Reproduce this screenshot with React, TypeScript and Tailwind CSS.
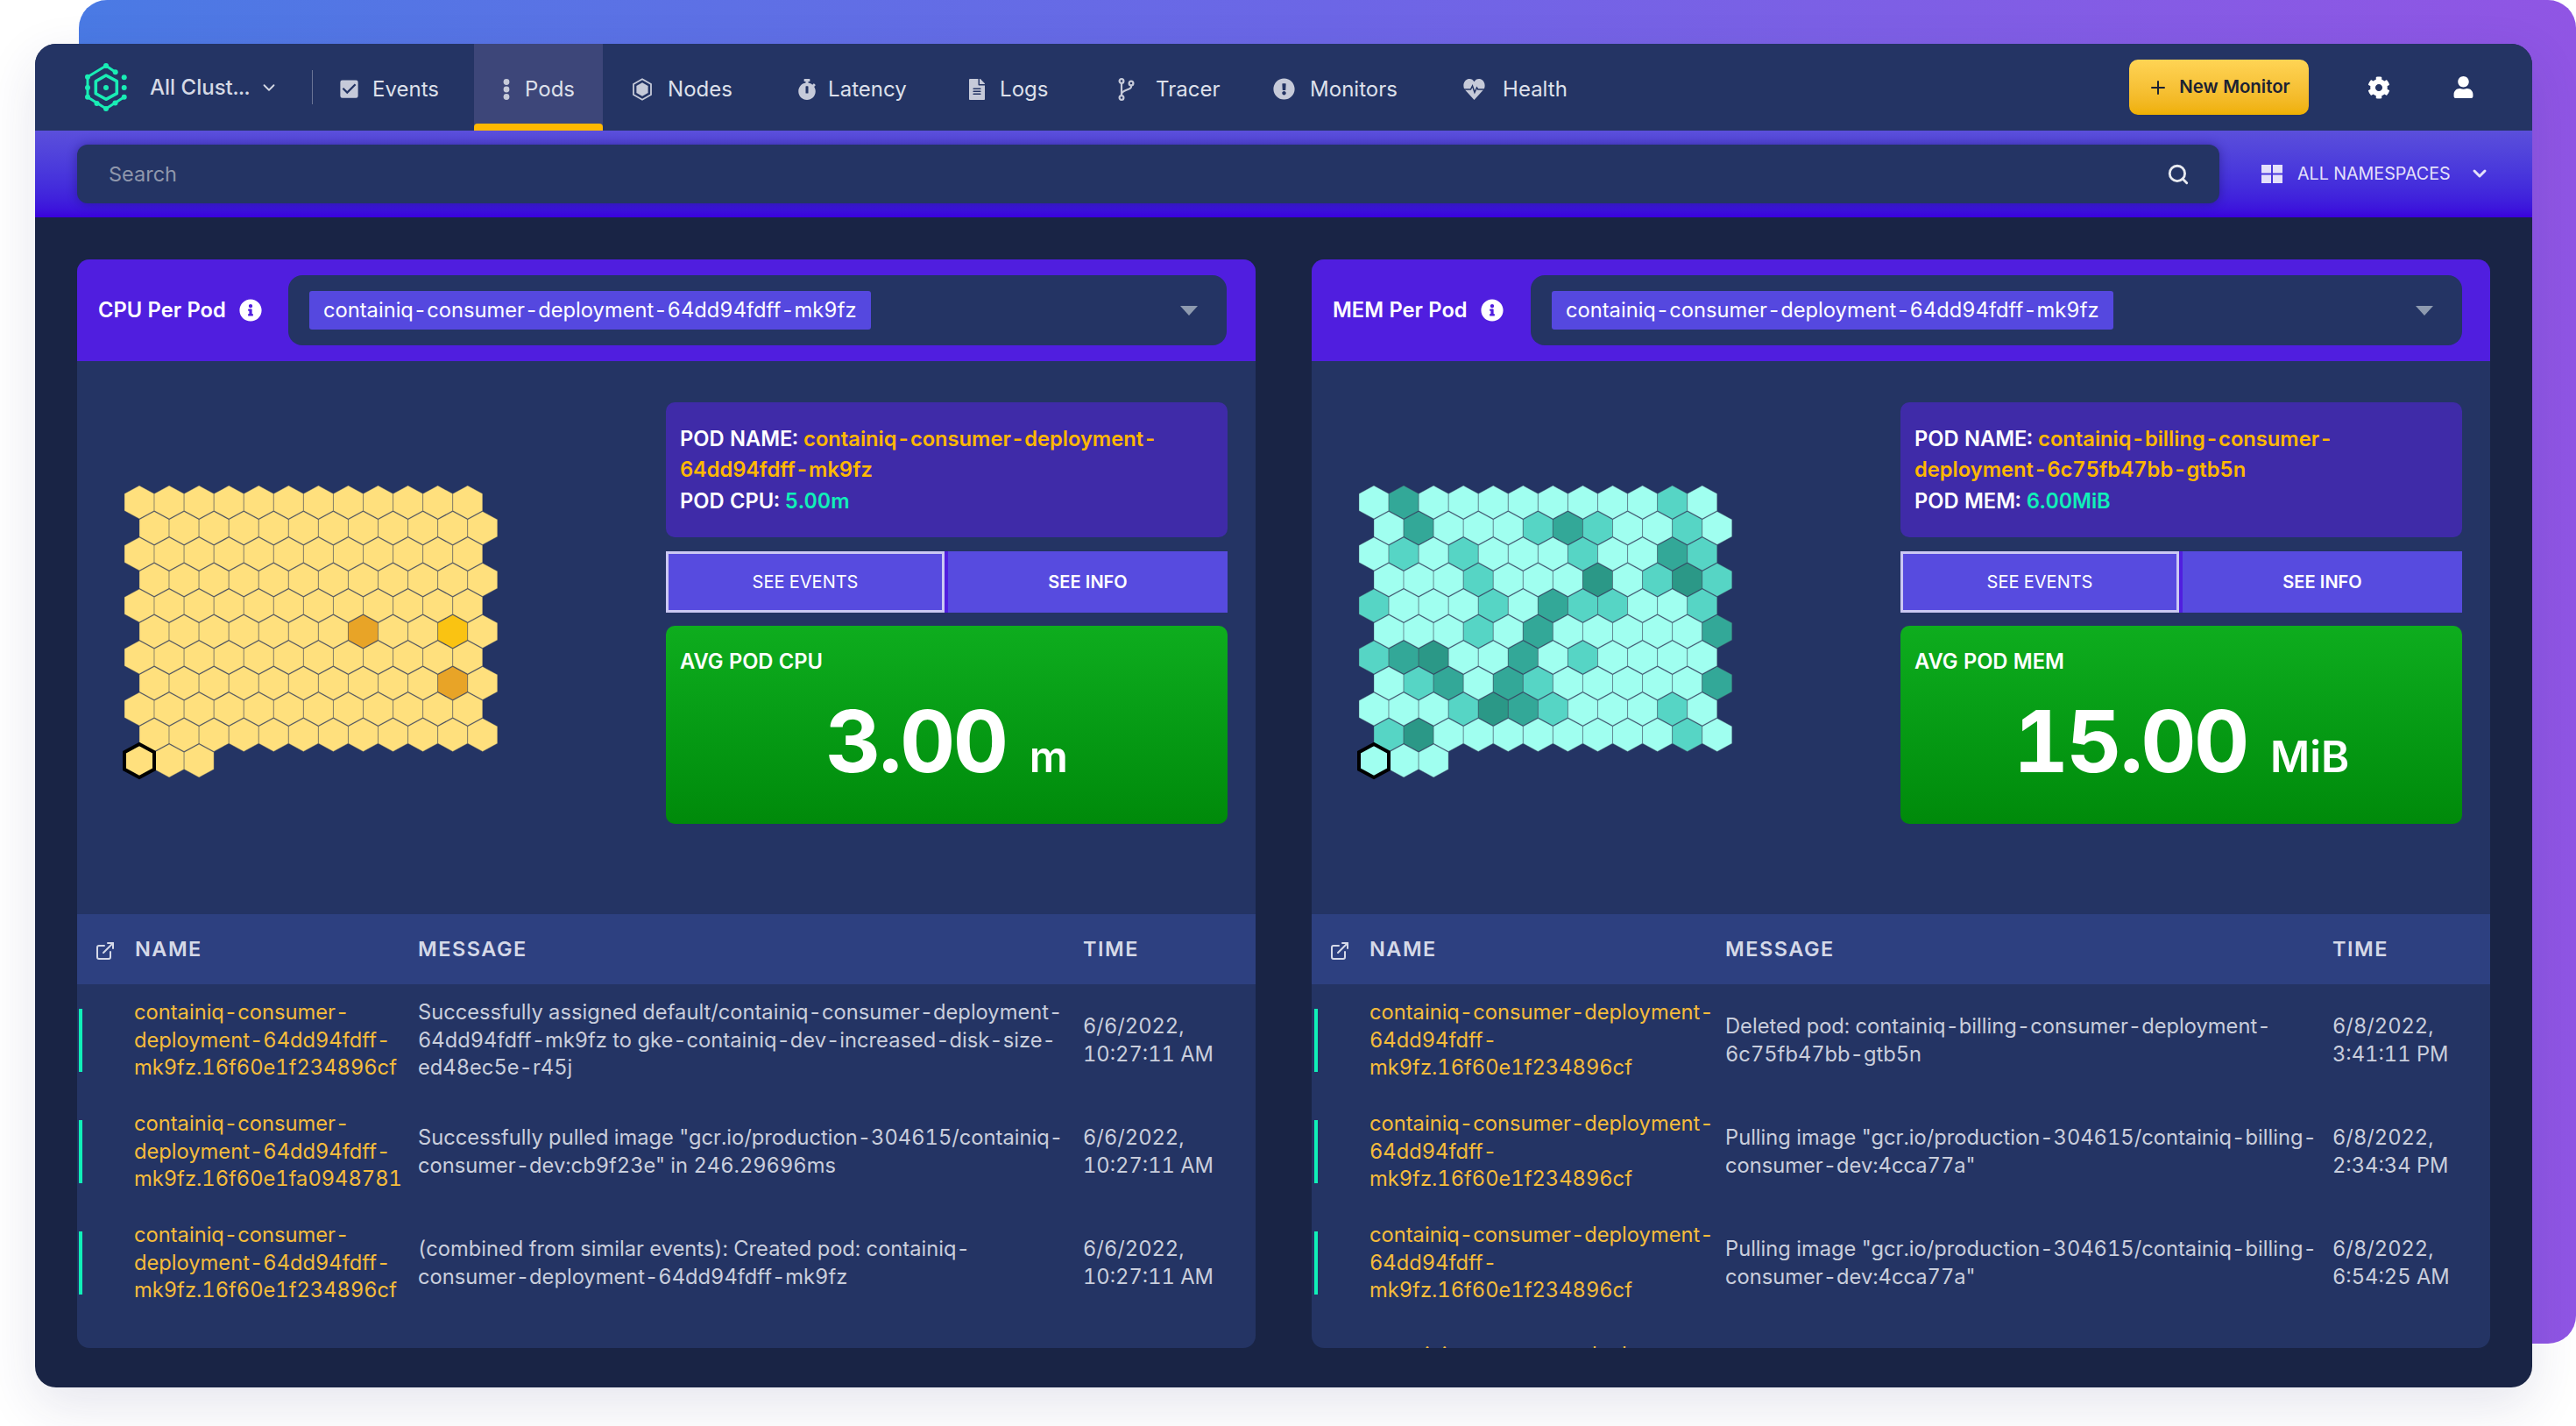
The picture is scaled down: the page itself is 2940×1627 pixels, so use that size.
import React from "react";
import { FaCog, FaExclamationCircle, FaFileAlt, FaInfoCircle, FaStopwatch, FaUser } from "react-icons/fa";
import { FiChevronDown, FiExternalLink, FiPlus, FiSearch } from "react-icons/fi";
import { MdCheckBox } from "react-icons/md";

function Logo() {
  const c = "#19EDB5";
  const dots: [number, number][] = [
    [31, 15], [41.7, 22.3], [10, 27.7], [10, 40], [10, 50.7], [20.5, 58], [31, 64], [41.5, 57.5], [51.7, 50.7], [51.7, 28.3], [51.7, 40], [31, 40],
  ];
  return (
    <svg width="50" height="56" viewBox="6 12 50 56" fill="none" className="shrink-0">
      <path d="M41.7 22.3 L31 15 L10 27.7 V50.7 L31 64 L51.7 50.7" stroke={c} strokeWidth="3" strokeLinejoin="round" />
      <path d="M31 26 L43.3 32.7 V46.7 L31 53.3 L19.3 46.7 V32.7 Z" stroke={c} strokeWidth="3.6" strokeLinejoin="round" />
      {dots.map(([x, y], i) => (
        <circle key={i} cx={x} cy={y} r="3" fill={c} />
      ))}
    </svg>
  );
}

function DotsIcon() {
  return (
    <svg width="12" height="26" viewBox="0 0 12 26" fill="#C6CAD9">
      <circle cx="6" cy="4.5" r="3.4" />
      <circle cx="6" cy="13" r="3.4" />
      <circle cx="6" cy="21.5" r="3.4" />
    </svg>
  );
}
function NodeIcon() {
  return (
    <svg width="22" height="26" viewBox="0 0 22 26" fill="none">
      <path d="M11 1.2 L21 7 V19 L11 24.8 L1 19 V7 Z" stroke="#C6CAD9" strokeWidth="1.8" />
      <path d="M11 5.2 L17.6 9 V17 L11 20.8 L4.4 17 V9 Z" fill="#C6CAD9" />
    </svg>
  );
}
function BranchIcon() {
  return (
    <svg width="19" height="26" viewBox="0 0 19 26" fill="none" stroke="#C6CAD9" strokeWidth="2.2">
      <circle cx="4" cy="3.5" r="2.4" />
      <circle cx="4" cy="22.5" r="2.4" />
      <circle cx="15" cy="6" r="2.4" />
      <path d="M4 6 V20 M15 8.5 V10 C15 14 4 13 4 18.5" />
    </svg>
  );
}
function HeartIcon() {
  return (
    <svg width="25" height="26" viewBox="0 0 25 26" fill="none">
      <path d="M12.5 25 L2 13.5 C-1 10 0 2 6.5 1 C9 0.7 11.2 2 12.5 4.2 C13.8 2 16 0.7 18.5 1 C25 2 26 10 23 13.5 Z" fill="#C6CAD9" />
      <path d="M1 13 H8.5 L10.5 9 L13 16.5 L15.5 11 L16.8 13 H24" stroke="#243464" strokeWidth="1.5" />
    </svg>
  );
}
function GridIcon() {
  return (
    <svg width="24" height="21" viewBox="0 0 24 21" fill="#E4E0FA">
      <rect x="0" y="0" width="11" height="9.5" />
      <rect x="13" y="0" width="11" height="9.5" />
      <rect x="0" y="11.5" width="11" height="9.5" />
      <rect x="13" y="11.5" width="11" height="9.5" />
    </svg>
  );
}

const HW = 34.07;
const RP = 29.5;

function hexPoints(cx: number, cy: number) {
  const h = 18.9;
  const s = 9.7;
  const w = 17;
  return `${cx},${cy - h} ${cx + w},${cy - s} ${cx + w},${cy + s} ${cx},${cy + h} ${cx - w},${cy + s} ${cx - w},${cy - s}`;
}

function HexMap({ base, levels, colors }: { base: string; levels: Record<string, string>; colors: Record<string, string> }) {
  const cells: React.ReactNode[] = [];
  for (let r = 0; r < 11; r++) {
    const count = r === 10 ? 3 : 12;
    for (let c = 0; c < count; c++) {
      const cx = 19 + c * HW + (r % 2 ? 17 : 0);
      const cy = 21 + r * RP;
      const lvl = levels[`${r}-${c}`];
      cells.push(<polygon key={`${r}-${c}`} points={hexPoints(cx, cy)} fill={lvl ? colors[lvl] : base} stroke="rgba(70,75,90,0.42)" strokeWidth="0.9" />);
    }
  }
  return (
    <svg width="440" height="340" viewBox="0 0 440 340" className="ml-[52px] mt-[140px] shrink-0">
      {cells}
      <polygon points={hexPoints(19, 21 + 10 * RP)} fill={base} stroke="#000" strokeWidth="4" />
    </svg>
  );
}

const tealLevels: Record<string, string> = {};
const tealSpec: [number, number[], number[], number[]][] = [
  [0, [10], [1], []],
  [1, [5, 7, 10], [1, 6], []],
  [2, [1, 3, 7, 11], [10], []],
  [3, [3, 9, 11], [], [7, 10]],
  [4, [0, 4, 7, 8, 11], [6], []],
  [5, [3], [5, 11], []],
  [6, [0, 7], [1, 5], [2]],
  [7, [1, 5], [2, 4, 11], []],
  [8, [3, 6, 10], [5], [4]],
  [9, [0, 10], [], [1]],
];
tealSpec.forEach(([r, m, d, x]) => {
  m.forEach((c) => (tealLevels[`${r}-${c}`] = "m"));
  d.forEach((c) => (tealLevels[`${r}-${c}`] = "d"));
  x.forEach((c) => (tealLevels[`${r}-${c}`] = "x"));
});

type Row = { name: string[]; msg: string[]; time: string[] };

const nameA = ["containiq-consumer-", "deployment-64dd94fdff-", "mk9fz.16f60e1f234896cf"];
const nameB = ["containiq-consumer-deployment-", "64dd94fdff-", "mk9fz.16f60e1f234896cf"];

const leftRows: Row[] = [
  {
    name: nameA,
    msg: ["Successfully assigned default/containiq-consumer-deployment-", "64dd94fdff-mk9fz to gke-containiq-dev-increased-disk-size-", "ed48ec5e-r45j"],
    time: ["6/6/2022,", "10:27:11 AM"],
  },
  {
    name: ["containiq-consumer-", "deployment-64dd94fdff-", "mk9fz.16f60e1fa0948781"],
    msg: ['Successfully pulled image "gcr.io/production-304615/containiq-', 'consumer-dev:cb9f23e" in 246.29696ms'],
    time: ["6/6/2022,", "10:27:11 AM"],
  },
  {
    name: nameA,
    msg: ["(combined from similar events): Created pod: containiq-", "consumer-deployment-64dd94fdff-mk9fz"],
    time: ["6/6/2022,", "10:27:11 AM"],
  },
];

const pull = ['Pulling image "gcr.io/production-304615/containiq-billing-', 'consumer-dev:4cca77a"'];
const rightRows: Row[] = [
  { name: nameB, msg: ["Deleted pod: containiq-billing-consumer-deployment-", "6c75fb47bb-gtb5n"], time: ["6/8/2022,", "3:41:11 PM"] },
  { name: nameB, msg: pull, time: ["6/8/2022,", "2:34:34 PM"] },
  { name: nameB, msg: pull, time: ["6/8/2022,", "6:54:25 AM"] },
  { name: ["containiq-consumer-deployment-"], msg: [], time: [] },
];

function Lines({ items }: { items: string[] }) {
  return (
    <>
      {items.map((l, i) => (
        <div key={i} className="whitespace-nowrap">
          {l}
        </div>
      ))}
    </>
  );
}

type PanelProps = {
  title: string;
  labelW: string;
  selectW: string;
  hex: React.ReactNode;
  podName: string[];
  podLabel: string;
  podValue: string;
  avgLabel: string;
  avg: string;
  unit: string;
  cols: string;
  nameBar: string;
  rows: Row[];
  iconPad: string;
  last?: boolean;
};

function Panel(p: PanelProps) {
  return (
    <section className="w-[1345px] h-[1242px] rounded-[14px] overflow-hidden bg-[#243464] flex flex-col shrink-0">
      <div className="h-[116px] bg-[#501EDF] flex items-center shrink-0">
        <div className={`${p.labelW} pl-[24px] flex items-center text-white font-semibold text-[23.7px]`}>
          <span className="whitespace-nowrap">{p.title}</span>
          <FaInfoCircle className="ml-[15px] text-white" size={26} />
        </div>
        <div className={`${p.selectW} h-[80px] rounded-[16px] bg-[#243464] flex items-center pl-[24px] pr-[33px] justify-between`}>
          <span className="h-[44px] rounded-[3px] bg-[#5548DF] text-white text-[23.7px] px-[16px] flex items-center whitespace-nowrap">containiq-consumer-deployment-64dd94fdff-mk9fz</span>
          <svg width="20" height="11" viewBox="0 0 20 11" fill="#8E9AAF">
            <path d="M0 0 H20 L10 11 Z" />
          </svg>
        </div>
      </div>
      <div className="h-[631px] flex shrink-0">
        <div className="w-[672px] shrink-0">{p.hex}</div>
        <div className="w-[641px] pt-[47px] flex flex-col">
          <div className="h-[154px] rounded-[10px] bg-[#3F2BA8] px-[16px] flex flex-col justify-center text-[23.7px] leading-[35.6px] font-semibold text-white">
            <div className="whitespace-nowrap">
              POD NAME: <span className="text-[#FFB800]">{p.podName[0]}</span>
            </div>
            <div className="whitespace-nowrap text-[#FFB800]">{p.podName[1]}</div>
            <div className="whitespace-nowrap">
              {p.podLabel}: <span className="text-[#10F0B8]">{p.podValue}</span>
            </div>
          </div>
          <div className="mt-[16px] h-[70px] flex gap-[4px] bg-[#501EDF] text-[20px] text-white">
            <div className="w-[318px] bg-[#574BDF] border-[3px] border-[#CBC8F3] flex items-center justify-center">SEE EVENTS</div>
            <div className="flex-1 bg-[#574BDF] font-semibold flex items-center justify-center">SEE INFO</div>
          </div>
          <div className="mt-[15px] h-[226px] rounded-[10px] bg-gradient-to-b from-[#0EAD1E] to-[#008A0A] px-[16px] pt-[25px] text-white">
            <div className="text-[23.7px] leading-[32px] font-semibold">{p.avgLabel}</div>
            <div className="flex items-baseline justify-center mt-[15px] font-semibold">
              <span className="text-[98px] leading-[120px] font-bold tracking-[-2.5px]">{p.avg}</span>
              <span className="text-[49px] leading-[120px] ml-[26px]">{p.unit}</span>
            </div>
          </div>
        </div>
      </div>
      <div className={`h-[80px] bg-[#2D4080] grid ${p.cols} items-center text-[#D5D9E8] text-[23.5px] font-semibold tracking-[1.5px] shrink-0`}>
        <div className={`flex items-center ${p.iconPad}`}>
          <FiExternalLink size={24} className="mr-[22px] mt-[3px] text-[#D5D9E8]" />
          NAME
        </div>
        <div>MESSAGE</div>
        <div>TIME</div>
      </div>
      <div className="flex-1 overflow-hidden">
        {p.rows.map((r, i) => (
          <div key={i} className={`h-[127px] grid ${p.cols} items-center text-[23.7px] leading-[31.6px]`}>
            <div className={r.msg.length ? "flex items-center" : "flex items-start pt-[12px]"}>
              <span className={`w-[4px] h-[72px] bg-[#10F0B8] shrink-0 ${p.nameBar} ${r.msg.length ? "" : "mt-[15px]"}`} />
              <div className="text-[#F5BC3B]">
                <Lines items={r.name} />
              </div>
            </div>
            <div className="text-[#C9CEDC]">
              <Lines items={r.msg} />
            </div>
            <div className="text-[#C9CEDC]">
              <Lines items={r.time} />
            </div>
          </div>
        ))}
      </div>
    </section>
  );
}

type Tab = { label: string; icon: React.ReactNode; w: string; pl: string; mr: string; active?: boolean };

const tabs: Tab[] = [
  { label: "Events", icon: <MdCheckBox size={27} color="#C6CAD9" />, w: "w-[184px]", pl: "pl-[28px]", mr: "mr-[13px]" },
  { label: "Pods", icon: <DotsIcon />, w: "w-[147px]", pl: "pl-[31px]", mr: "mr-[15px]", active: true },
  { label: "Nodes", icon: <NodeIcon />, w: "w-[200px]", pl: "pl-[34px]", mr: "mr-[18px]" },
  { label: "Latency", icon: <FaStopwatch size={24} color="#C6CAD9" />, w: "w-[200px]", pl: "pl-[21px]", mr: "mr-[12px]" },
  { label: "Logs", icon: <FaFileAlt size={24} color="#C6CAD9" />, w: "w-[170px]", pl: "pl-[15px]", mr: "mr-[14px]" },
  { label: "Tracer", icon: <BranchIcon />, w: "w-[180px]", pl: "pl-[18px]", mr: "mr-[24px]" },
  { label: "Monitors", icon: <FaExclamationCircle size={25} color="#C6CAD9" />, w: "w-[210px]", pl: "pl-[15px]", mr: "mr-[17px]" },
  { label: "Health", icon: <HeartIcon />, w: "w-[200px]", pl: "pl-[22px]", mr: "mr-[20px]" },
];

export default function App() {
  return (
    <div className="relative w-[2940px] h-[1627px] bg-white overflow-hidden font-['Inter',sans-serif] tabular-nums">
      <div className="absolute left-[90px] top-0 right-0 h-[1533px] rounded-[32px] bg-gradient-to-r from-[#4A7AE4] via-[#6C66E6] to-[#9055E4]" />
      <div className="absolute left-[40px] top-[50px] w-[2850px] h-[1533px] rounded-[24px] overflow-hidden bg-[#192445] flex flex-col shadow-[0_20px_60px_rgba(40,40,110,0.12)]">
        <nav className="h-[99px] bg-[#243464] flex items-center pl-[56px] shrink-0">
          <Logo />
          <span className="ml-[25px] text-[24px] font-medium text-[#D5D9E5] whitespace-nowrap">All Clust...</span>
          <FiChevronDown size={22} color="#D5D9E5" className="ml-[11px] mr-[38px]" />
          <span className="w-[1px] h-[39px] bg-[#6B7596] shrink-0" />
          {tabs.map((t) => (
            <div key={t.label} className={`relative h-full flex items-center pt-[4px] text-[24px] text-[#DDE0EA] shrink-0 ${t.w} ${t.pl} ${t.active ? "bg-[#3D4679]" : ""}`}>
              <span className={`flex items-center justify-center ${t.mr}`}>{t.icon}</span>
              {t.label}
              {t.active && <span className="absolute left-0 right-0 bottom-0 h-[8px] rounded-t-[4px] bg-[#FFB800]" />}
            </div>
          ))}
          <button className="ml-auto h-[63px] w-[205px] rounded-[10px] bg-gradient-to-b from-[#FFD454] to-[#EFB000] flex items-center justify-center text-[20.4px] font-semibold text-[#1c2233] whitespace-nowrap">
            <FiPlus size={24} className="mr-[12px]" />
            New Monitor
          </button>
          <FaCog size={26} color="#fff" className="ml-[67px]" />
          <FaUser size={25} color="#fff" className="ml-[71px] mr-[66px]" />
        </nav>
        <div className="h-[99px] bg-gradient-to-b from-[#5B4FDB] to-[#3A00DC] flex items-center pl-[48px] shrink-0">
          <div className="w-[2445px] h-[67px] rounded-[12px] bg-[#243464] flex items-center justify-between pl-[36px] pr-[34px] shadow-[0_0_12px_rgba(20,10,90,0.45)]">
            <span className="text-[23.5px] text-[#8F97AC]">Search</span>
            <FiSearch size={26} color="#E8EAF0" strokeWidth={2.6} />
          </div>
          <div className="ml-[48px] flex items-center text-[19.7px] text-[#E4E0FA] whitespace-nowrap">
            <GridIcon />
            <span className="ml-[17px]">ALL NAMESPACES</span>
            <FiChevronDown size={24} className="ml-[21px]" strokeWidth={3} />
          </div>
        </div>
        <main className="flex-1 pt-[48px] pl-[48px] flex gap-[64px]">
          <Panel
            title="CPU Per Pod"
            labelW="w-[241px]"
            selectW="w-[1071px]"
            hex={<HexMap base="#FFE07D" levels={{ "5-7": "o", "5-10": "b", "7-10": "o" }} colors={{ o: "#E8A427", b: "#FAC312" }} />}
            podName={["containiq-consumer-deployment-", "64dd94fdff-mk9fz"]}
            podLabel="POD CPU"
            podValue="5.00m"
            avgLabel="AVG POD CPU"
            avg="3.00"
            unit="m"
            cols="grid-cols-[389px_759px_197px]"
            nameBar="ml-[2px] mr-[59px]"
            iconPad="pl-[20px]"
            rows={leftRows}
          />
          <Panel
            title="MEM Per Pod"
            labelW="w-[250px]"
            selectW="w-[1063px]"
            hex={<HexMap base="#A0FFF0" levels={tealLevels} colors={{ m: "#56D5C5", d: "#33A898", x: "#2B9887" }} />}
            podName={["containiq-billing-consumer-", "deployment-6c75fb47bb-gtb5n"]}
            podLabel="POD MEM"
            podValue="6.00MiB"
            avgLabel="AVG POD MEM"
            avg="15.00"
            unit="MiB"
            cols="grid-cols-[472px_693px_180px]"
            nameBar="ml-[3px] mr-[59px]"
            iconPad="pl-[20px]"
            rows={rightRows}
          />
        </main>
      </div>
    </div>
  );
}
